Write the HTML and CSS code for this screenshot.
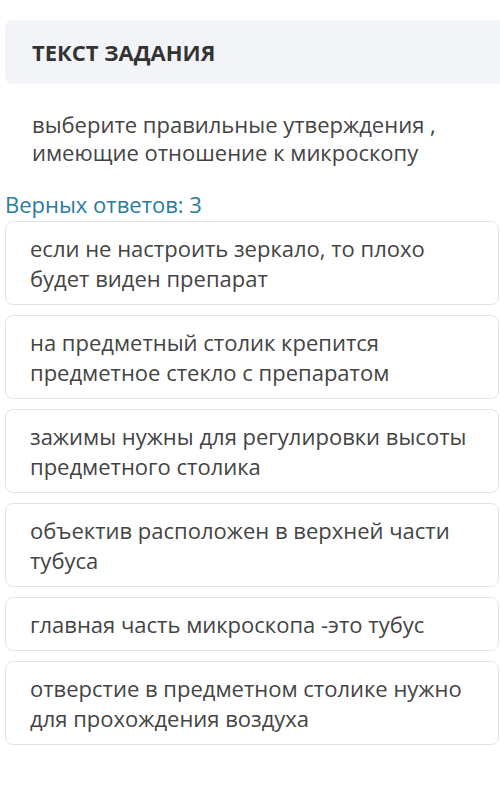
FILE: index.html
```html
<!DOCTYPE html>
<html lang="ru">
<head>
<meta charset="utf-8">
<link rel="stylesheet" href="styles.css">
</head>
<body>
<div class="page">
  <div class="header"><span class="header-title">ТЕКСТ ЗАДАНИЯ</span></div>
  <div class="question">выберите правильные утверждения , имеющие отношение к микроскопу</div>
  <div class="count">Верных ответов: 3</div>
  <div class="options">
    <div class="option">если не настроить зеркало, то плохо будет виден препарат</div>
    <div class="option">на предметный столик крепится предметное стекло с препаратом</div>
    <div class="option">зажимы нужны для регулировки высоты предметного столика</div>
    <div class="option">объектив расположен в верхней части тубуса</div>
    <div class="option">главная часть микроскопа -это тубус</div>
    <div class="option">отверстие в предметном столике нужно для прохождения воздуха</div>
  </div>
</div>
</body>
</html>
```

FILE: styles.css
```css
html, body {
  margin: 0;
  padding: 0;
  background: #ffffff;
}
body {
  font-family: "Open Sans", "Noto Sans", sans-serif;
  color: #444444;
}
.page {
  width: 500px;
  padding: 20px 0 0 5px;
  box-sizing: border-box;
}
.header {
  background: #f3f4f7;
  border-radius: 8px 0 0 8px;
  height: 64px;
  display: flex;
  align-items: center;
  padding-left: 27px;
  margin-right: -10px;
}
.header-title {
  font-weight: 700;
  font-size: 22px;
  color: #333333;
}
.question {
  padding: 26px 40px 0 27px;
  font-size: 22px;
  line-height: 28px;
  color: #444444;
}
.count {
  margin-top: 24px;
  font-size: 22px;
  line-height: 28px;
  color: #2a7c9e;
}
.options {
  display: flex;
  flex-direction: column;
  gap: 10px;
  margin-top: 3px;
  width: 494px;
}
.option {
  border: 1px solid #e2e3e5;
  border-radius: 8px;
  padding: 11px 20px 11px 24px;
  font-size: 22px;
  line-height: 30px;
  color: #444444;
}
```
